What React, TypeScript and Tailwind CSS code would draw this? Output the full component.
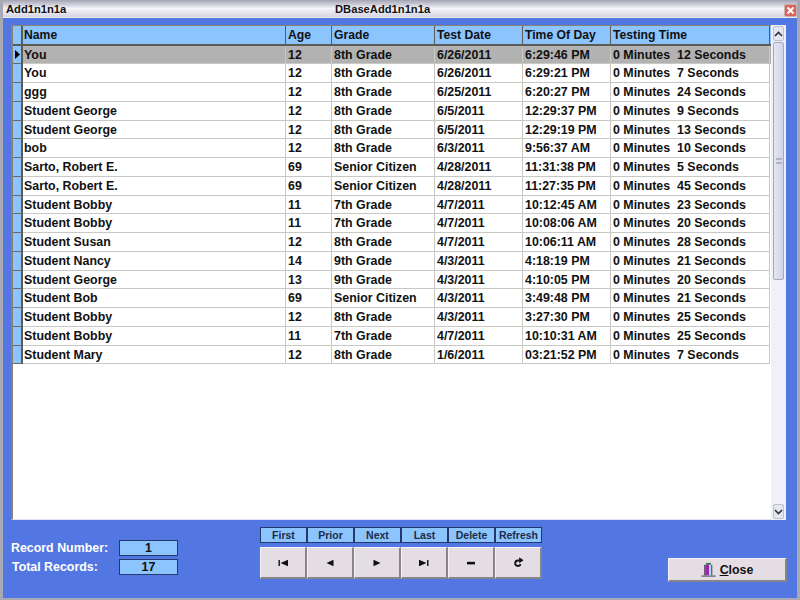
import React from "react";

const rows: string[][] = [
  ["You", "12", "8th Grade", "6/26/2011", "6:29:46 PM", "0 Minutes  12 Seconds"],
  ["You", "12", "8th Grade", "6/26/2011", "6:29:21 PM", "0 Minutes  7 Seconds"],
  ["ggg", "12", "8th Grade", "6/25/2011", "6:20:27 PM", "0 Minutes  24 Seconds"],
  ["Student George", "12", "8th Grade", "6/5/2011", "12:29:37 PM", "0 Minutes  9 Seconds"],
  ["Student George", "12", "8th Grade", "6/5/2011", "12:29:19 PM", "0 Minutes  13 Seconds"],
  ["bob", "12", "8th Grade", "6/3/2011", "9:56:37 AM", "0 Minutes  10 Seconds"],
  ["Sarto, Robert E.", "69", "Senior Citizen", "4/28/2011", "11:31:38 PM", "0 Minutes  5 Seconds"],
  ["Sarto, Robert E.", "69", "Senior Citizen", "4/28/2011", "11:27:35 PM", "0 Minutes  45 Seconds"],
  ["Student Bobby", "11", "7th Grade", "4/7/2011", "10:12:45 AM", "0 Minutes  23 Seconds"],
  ["Student Bobby", "11", "7th Grade", "4/7/2011", "10:08:06 AM", "0 Minutes  20 Seconds"],
  ["Student Susan", "12", "8th Grade", "4/7/2011", "10:06:11 AM", "0 Minutes  28 Seconds"],
  ["Student Nancy", "14", "9th Grade", "4/3/2011", "4:18:19 PM", "0 Minutes  21 Seconds"],
  ["Student George", "13", "9th Grade", "4/3/2011", "4:10:05 PM", "0 Minutes  20 Seconds"],
  ["Student Bob", "69", "Senior Citizen", "4/3/2011", "3:49:48 PM", "0 Minutes  21 Seconds"],
  ["Student Bobby", "12", "8th Grade", "4/3/2011", "3:27:30 PM", "0 Minutes  25 Seconds"],
  ["Student Bobby", "11", "7th Grade", "4/7/2011", "10:10:31 AM", "0 Minutes  25 Seconds"],
  ["Student Mary", "12", "8th Grade", "1/6/2011", "03:21:52 PM", "0 Minutes  7 Seconds"],
];
const headers = ["Name", "Age", "Grade", "Test Date", "Time Of Day", "Testing Time"];
const widths = ["w-[263px] pl-[1px]", "w-[46px] pl-[2px]", "w-[103px] pl-[2px]", "w-[88px] pl-[2px]", "w-[88px] pl-[2px]", "w-[159px] pl-[2px]"];

const navs: [string, React.ReactNode, number][] = [
  ["First", <path d="M0.5 2v6h1.4V2zM10 1.8 2.5 5l7.5 3.2z" />, 10],
  ["Prior", <path d="M8.5 1.8 1.5 5l7 3.2z" />, 10],
  ["Next", <path d="M1.5 1.8l7 3.2-7 3.2z" />, 10],
  ["Last", <path d="M0 1.8 7.5 5 0 8.2zM8.1 2v6h1.4V2z" />, 10],
  ["Delete", <path d="M1 3.8h8v2.6H1z" />, 10],
  ["Refresh", <path d="M7.9 6.2A3.1 3.1 0 1 1 5 2h1V.2l3.6 2.5L6 5.2V3.7H5a1.5 1.5 0 1 0 1.4 2z" />, 12],
];

export default function App() {
  return (
    <div className="w-[800px] h-[600px] overflow-hidden flex flex-col bg-[#5277e2] font-['Liberation_Sans',sans-serif] font-bold text-[12.4px] text-[#111] border-x-[3px] border-b-[2px] border-[#a9a9b5]">
      <div className="h-[18px] shrink-0 -mx-[3px] flex items-center relative bg-gradient-to-b from-[#a3a3b4] via-[#f4f4fa] to-[#d5d5e2] text-[11.2px] pl-[6px] pt-[2px] border-b border-[#ecece8]">
        <span className="w-[329px]">Add1n1n1a</span>
        <span>DBaseAdd1n1n1a</span>
        <span className="absolute right-[3px] top-[4px] w-[13px] h-[13px] rounded-[2px] bg-[#d9635a] border border-[#c9b0ae] flex items-center justify-center">
          <svg width="9" height="9" viewBox="0 0 9 9"><path d="M1.5 1.5l6 6M7.5 1.5l-6 6" stroke="#fff" strokeWidth="2" /></svg>
        </span>
      </div>

      <div className="flex ml-[8px] mt-[7px] w-[775px] h-[495px] shrink-0">
        <div className="w-[760px] h-full bg-white border-l-[2px] border-t-[1px] border-[#8a8170] shrink-0 flex flex-col border-b border-b-[#dfe3f2]">
          <div className="flex h-[19.5px] shrink-0 bg-[#8cc4fd] border-b-[2px] border-[#5c5a52]">
            <div className="w-[10px] shrink-0 border-r-[2px] border-[#5c5a52]" />
            {headers.map((h, i) => (
              <div key={h} className={`${widths[i]} shrink-0 leading-[19px] border-r-[1px] border-[#5c5a52] text-[12.2px]`}>{h}</div>
            ))}
          </div>
          {rows.map((r, ri) => (
            <div key={ri} className={`flex h-[18.75px] shrink-0 ${ri === 0 ? "bg-[#b2b2b2]" : "bg-white"}`}>
              <div className="w-[10px] shrink-0 bg-[#8cc4fd] border-r-[2px] border-b border-r-[#5c5a52] border-b-[#6e6a60] flex items-center justify-center">
                {ri === 0 && <svg width="5" height="9" viewBox="0 0 5 9"><path d="M0 0l5 4.5L0 9z" fill="#000" /></svg>}
              </div>
              {r.map((c, i) => (
                <div key={i} className={`${widths[i]} shrink-0 leading-[19.75px] whitespace-pre border-r border-b border-[#c8c8c4]`}>{c}</div>
              ))}
            </div>
          ))}
        </div>
        <div className="w-[15px] h-full bg-[#f0f0f8] flex flex-col shrink-0 px-[2px] pt-[1px]">
          <div className="h-[15px] shrink-0 bg-[#e4e6f2] border border-[#c0c0cc] rounded-[2px] flex items-center justify-center">
            <svg width="9" height="6" viewBox="0 0 9 6"><path d="M1 5l3.5-3.5L8 5" fill="none" stroke="#333" strokeWidth="1.6" /></svg>
          </div>
          <div className="h-[238px] mt-[1px] shrink-0 bg-gradient-to-r from-[#e4e6f4] to-[#d2d5e8] border border-[#a8a8b8] rounded-[2px] flex items-center justify-center">
            <div className="w-[6px] h-[6px] border-y-[2px] border-[#b4b4c4]" />
          </div>
          <div className="flex-1" />
          <div className="h-[15px] mb-[1px] shrink-0 bg-[#e4e6f2] border border-[#c0c0cc] rounded-[2px] flex items-center justify-center">
            <svg width="9" height="6" viewBox="0 0 9 6"><path d="M1 1l3.5 3.5L8 1" fill="none" stroke="#333" strokeWidth="1.6" /></svg>
          </div>
        </div>
      </div>

      <div className="flex flex-1 relative">
        <div className="ml-[8px] mt-[18.5px] w-[167px] text-white">
          <div className="flex justify-between h-[19px] items-center"><span>Record Number:</span><span className="w-[59px] h-[16px] bg-[#8cc4fd] border border-[#24386e] text-[#111] text-center leading-[14px]">1</span></div>
          <div className="flex justify-between h-[19px] items-center"><span className="ml-[1px]">Total Records:</span><span className="w-[59px] h-[16px] bg-[#8cc4fd] border border-[#24386e] text-[#111] text-center leading-[14px]">17</span></div>
        </div>
        <div className="ml-[82px] mt-[7px] flex flex-col">
          <div className="flex">
            {navs.map(([n]) => (
              <div key={n} className="w-[47px] h-[16px] bg-[#8cc4fd] border border-[#24386e] text-[10.5px] text-center leading-[14px] text-[#1c2c4c]">{n}</div>
            ))}
          </div>
          <div className="flex mt-[4px]">
            {navs.map(([n, icon, size]) => (
              <div key={n} className="w-[47px] h-[32px] bg-[#e4dee4] border-t border-l border-[#f4f2f4] border-r-2 border-b-2 border-r-[#85858a] border-b-[#85858a] flex items-center justify-center">
                <svg width={size} height={size} viewBox="0 0 10 10" fill="#111">{icon}</svg>
              </div>
            ))}
          </div>
        </div>
        <div className="ml-auto mr-[10px] mt-[38px] w-[119px] h-[24px] bg-[#e4dee4] border-t border-l border-[#f4f2f4] border-r-2 border-b-2 border-r-[#85858a] border-b-[#85858a] flex items-center justify-center gap-[4px] text-[12.4px]">
          <svg width="15" height="15" viewBox="0 0 15 16">
            <path d="M5 1h5v2H5z" fill="#1f7a3a" />
            <path d="M4 3h4v11H4z" fill="#a020b0" />
            <path d="M8 3h3v11H8z" fill="#a8dcf0" />
            <path d="M10.5 3h1v11h-1zM3 14h1v-11H3z" fill="#33334a" />
            <path d="M0 15h15" stroke="#334" strokeWidth="1" />
          </svg>
          <span className="pt-[2px]"><span className="underline">C</span>lose</span>
        </div>
      </div>
    </div>
  );
}
